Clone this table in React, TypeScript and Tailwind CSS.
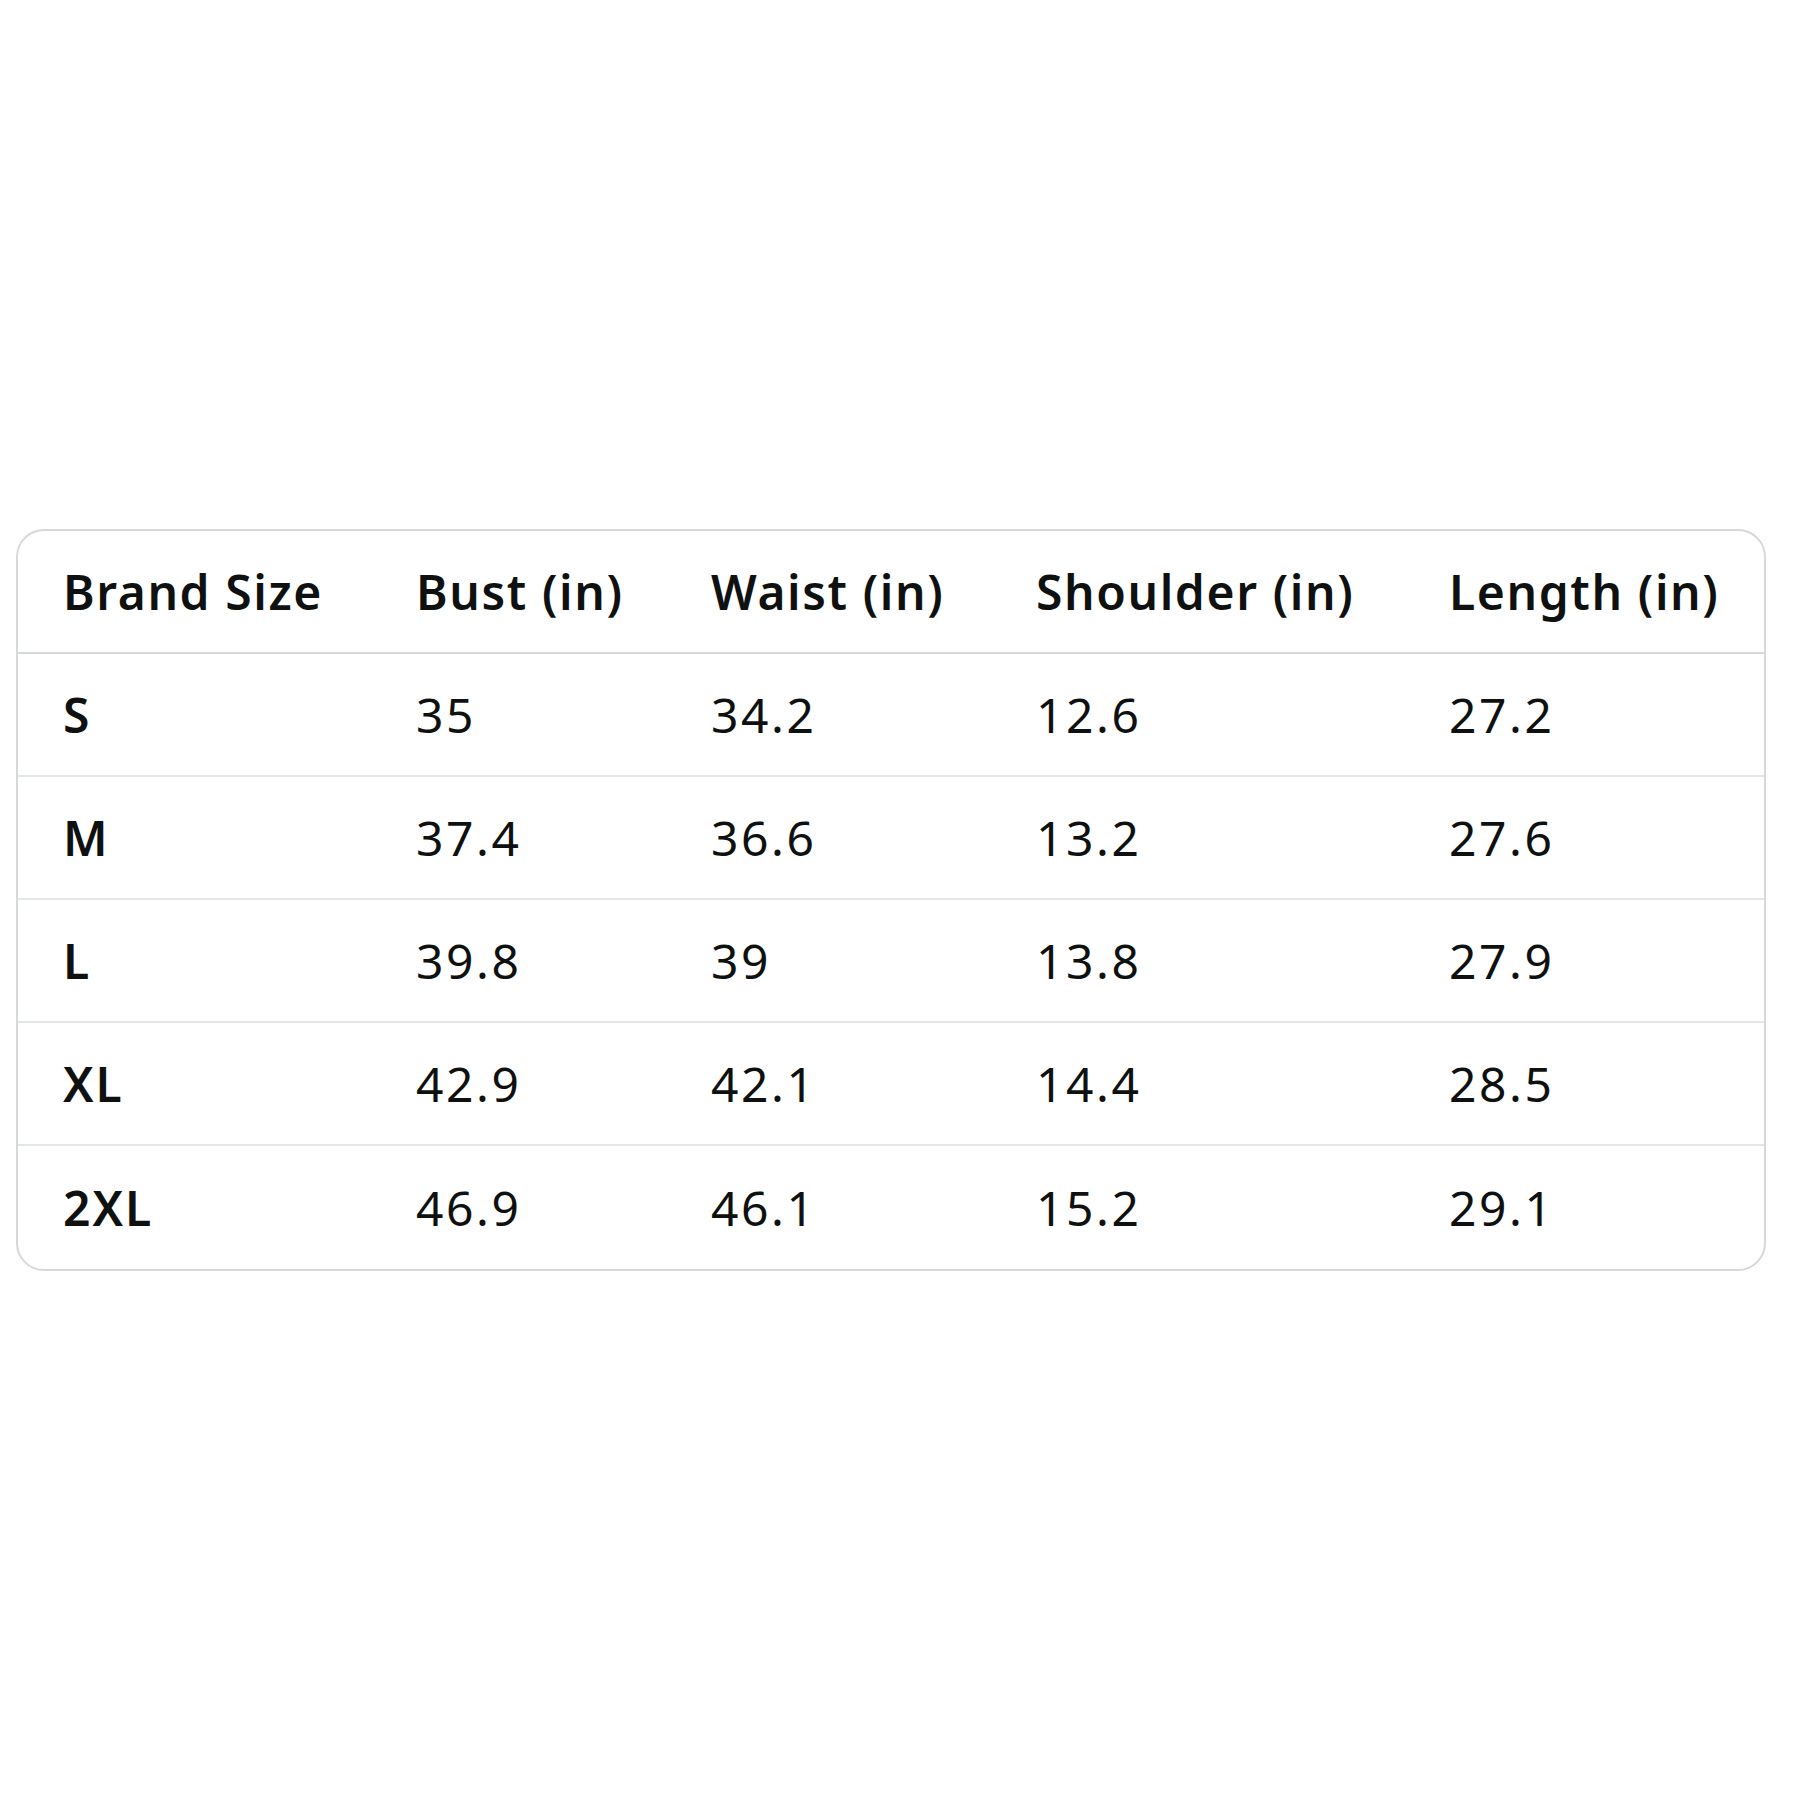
import React from "react";

const headers = ["Brand Size", "Bust (in)", "Waist (in)", "Shoulder (in)", "Length (in)"];

const rows: string[][] = [
  ["S", "35", "34.2", "12.6", "27.2"],
  ["M", "37.4", "36.6", "13.2", "27.6"],
  ["L", "39.8", "39", "13.8", "27.9"],
  ["XL", "42.9", "42.1", "14.4", "28.5"],
  ["2XL", "46.9", "46.1", "15.2", "29.1"],
];

const cols = "grid grid-cols-[350px_295px_325px_413px_1fr]";

const App = () => {
  return (
    <div
      className="w-[1800px] h-[1800px] bg-white pt-[529px] pl-[16px]"
      style={{ fontFamily: '"Noto Sans", "Open Sans", sans-serif' }}
    >
      <div className="w-[1750px] rounded-[28px] border-2 border-[#d5d9d9] overflow-hidden text-[#0f1111] text-[48px]">
        <div
          className={`${cols} h-[123px] items-center border-b-2 border-[#d5d9d9] font-semibold tracking-[1.6px]`}
        >
          {headers.map((h, j) => (
            <div key={h} className={`whitespace-nowrap ${j === 0 ? "pl-[45px]" : "pl-[48px]"}`}>
              {h}
            </div>
          ))}
        </div>
        {rows.map((row, i) => (
          <div
            key={row[0]}
            className={`${cols} h-[123px] items-center tracking-[2.6px] ${
              i < rows.length - 1 ? "border-b-2 border-[#e3e6e6]" : ""
            }`}
          >
            {row.map((cell, j) => (
              <div
                key={j}
                className={`whitespace-nowrap ${
                  j === 0 ? "pl-[45px] font-semibold tracking-[2px]" : "pl-[48px]"
                }`}
              >
                {cell}
              </div>
            ))}
          </div>
        ))}
      </div>
    </div>
  );
};

export default App;
